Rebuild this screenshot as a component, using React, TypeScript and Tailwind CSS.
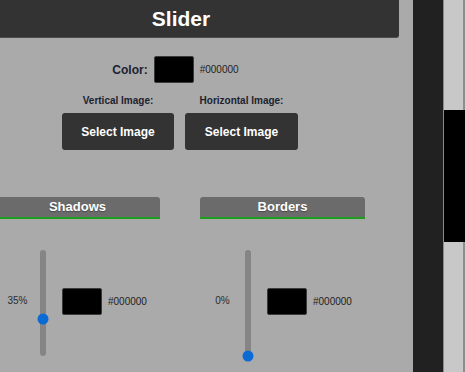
import React from "react";

const sections = [
  { title: "Shadows", value: 35, color: "#000000" },
  { title: "Borders", value: 0, color: "#000000" },
];

function VerticalSlider({ value }: { value: number }) {
  return (
    <div className="relative h-[106px] w-[6px] rounded-full bg-[#858585]">
      {/* thumb */}
      <div
        className="absolute left-1/2 h-[11px] w-[11px] -translate-x-1/2 -translate-y-1/2 rounded-full bg-[#0b6bd4]"
        style={{ top: `${100 - value}%` }}
      />
    </div>
  );
}

function Swatch() {
  return <div className="h-[27px] w-[40px] rounded-[2px] border border-[#3a3a3a] bg-black" />;
}

export default function App() {
  return (
    <div className="flex h-[372px] w-[465px] overflow-hidden font-['Liberation_Sans',Arial,sans-serif]">
      {/* main panel */}
      <div className="flex w-[413px] flex-col overflow-hidden bg-[#aaaaaa]">
        <div className="flex h-[38px] w-[399px] shrink-0 items-center justify-center rounded-br-[3px] border-b border-[#4c4c4c] bg-[#333333] pr-[37px]">
          <h1 className="text-[21px] font-bold text-white">Slider</h1>
        </div>

        <div className="flex w-[360px] flex-col items-center">
          {/* color row */}
          <div className="mt-[18px] flex h-[27px] items-center pr-[9px]">
            <span className="text-[12px] font-bold text-[#1c2230]">Color:</span>
            <div className="ml-[6px]">
              <Swatch />
            </div>
            <span className="ml-[6px] text-[10px] text-[#222]">#000000</span>
          </div>

          {/* image pickers */}
          <div className="mt-[12px] flex gap-[11px]">
            <div className="flex w-[112px] flex-col items-center">
              <span className="text-[10px] font-bold leading-[12px] text-[#1c2230]">Vertical Image:</span>
              <button className="mt-[6px] h-[37px] w-[112px] rounded-[3px] bg-[#333333] text-[12px] font-bold text-white">
                Select Image
              </button>
            </div>
            <div className="flex w-[113px] flex-col items-center">
              <span className="text-[10px] font-bold leading-[12px] text-[#1c2230]">Horizontal Image:</span>
              <button className="mt-[6px] h-[37px] w-[113px] rounded-[3px] bg-[#333333] text-[12px] font-bold text-white">
                Select Image
              </button>
            </div>
          </div>
        </div>

        {/* shadows / borders */}
        <div className="-ml-[5px] mt-[47px] flex gap-[40px]">
          {sections.map((s) => (
            <div key={s.title} className="flex w-[165px] flex-col">
              <div className="flex h-[22px] items-center justify-center rounded-t-[3px] border-b-2 border-[#1d9f1d] bg-[#6b6b6b] text-[13px] font-bold text-white [text-shadow:0_1px_1px_rgba(0,0,0,0.35)]">
                {s.title}
              </div>
              <div className="mt-[31px] flex items-center">
                <span className="mb-[5px] w-[45px] text-center text-[10px] text-[#2a2a2a]">{s.value}%</span>
                <VerticalSlider value={s.value} />
                <div className="mb-[4px] ml-[16px]">
                  <Swatch />
                </div>
                <span className="mb-[4px] ml-[6px] text-[10px] text-[#222]">{s.color}</span>
              </div>
            </div>
          ))}
        </div>
      </div>

      {/* dark gutter */}
      <div className="w-[30px] bg-[#212121]" />

      {/* scrollbar */}
      <div className="flex w-[22px] flex-col border-l border-[#8a8a8a] bg-[#c8c8c8]">
        <div className="h-[110px] border-r-2 border-[#8d8d8d]" />
        <div className="h-[132px] bg-black" />
        <div className="flex-1 border-r-2 border-[#8d8d8d]" />
      </div>
    </div>
  );
}
